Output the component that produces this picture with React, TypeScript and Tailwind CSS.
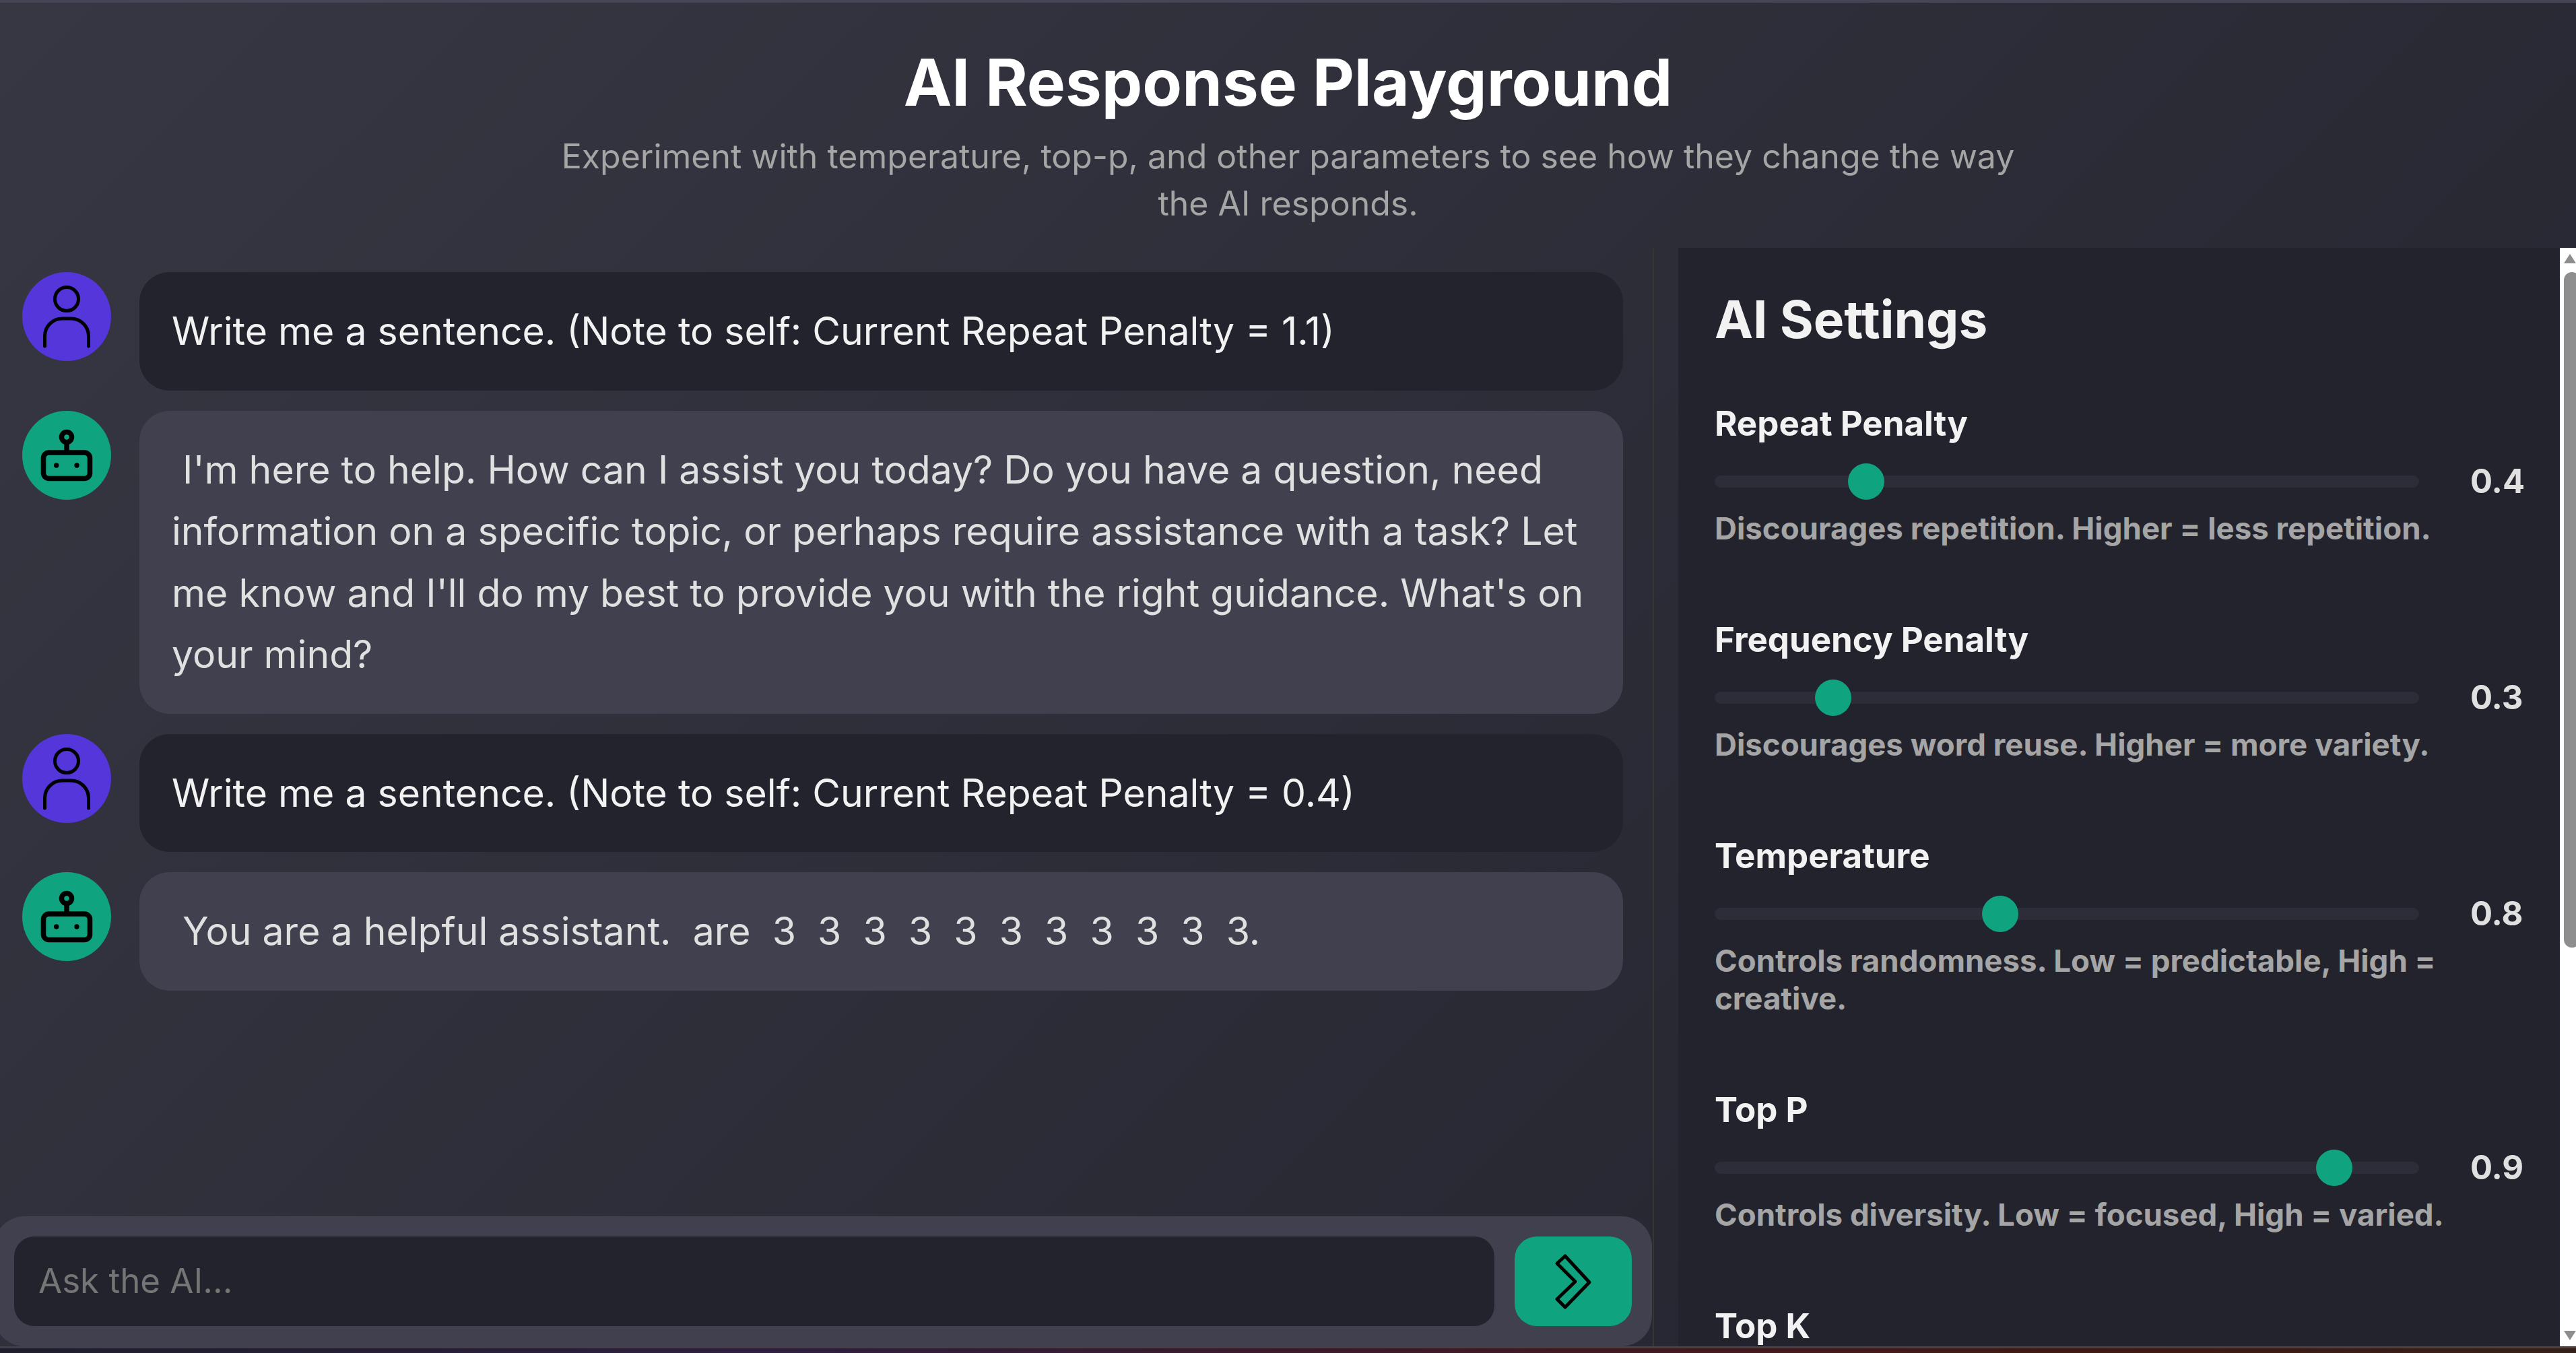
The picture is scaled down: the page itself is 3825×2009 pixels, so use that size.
import React from "react";

function UserIcon() {
  return (
    <svg viewBox="0 0 132 132" className="w-[132px] h-[132px]" fill="none" stroke="#000" strokeWidth="5" strokeLinecap="round">
      <circle cx="66" cy="40" r="17.5" />
      <path d="M33.500 110V95a26 26 0 0 1 26-26h13a26 26 0 0 1 26 26V110" />
    </svg>
  );
}

function BotIcon() {
  return (
    <svg viewBox="0 0 132 132" className="w-[132px] h-[132px]" fill="none" stroke="#000" strokeWidth="7.500">
      <circle cx="66" cy="39" r="7.500" />
      <path d="M66 46V62" />
      <rect x="31.500" y="62" width="69" height="38.500" rx="8" />
      <circle cx="50.700" cy="81" r="3.700" fill="#000" stroke="none" />
      <circle cx="81" cy="81" r="3.700" fill="#000" stroke="none" />
    </svg>
  );
}

function Message({ who, children }: { who: "user" | "ai"; children: React.ReactNode }) {
  const isUser = who === "user";
  return (
    <div className="flex items-start gap-[42px]">
      <div className={`w-[132px] h-[132px] shrink-0 rounded-full ${isUser ? "bg-[#5436da]" : "bg-[#10a37f]"}`}>
        {isUser ? <UserIcon /> : <BotIcon />}
      </div>
      <div className={`flex-1 rounded-[45px] px-[48px] py-[42px] text-[57.120px] leading-[91.500px] ${isUser ? "bg-[#23232e] text-[#f2f2f2]" : "bg-[#40404e] text-[#e0e0e0]"}`}>
        {children}
      </div>
    </div>
  );
}

function Setting({ label, value, min, max, step, desc }: { label: string; value: number; min: number; max: number; step: number; desc: string }) {
  return (
    <div className="mb-[99px]">
      <label className="block text-[51px] leading-[75px] font-bold text-[#f2f2f2]">{label}</label>
      <div className="flex items-center mt-[22px] h-[54px]">
        <input
          type="range"
          min={min}
          max={max}
          step={step}
          defaultValue={value}
          className="block shrink-0 w-[1046px] h-[18px] m-0 rounded-[9px] bg-[#2d2d39] appearance-none outline-none [&::-webkit-slider-thumb]:appearance-none [&::-webkit-slider-thumb]:w-[54px] [&::-webkit-slider-thumb]:h-[54px] [&::-webkit-slider-thumb]:rounded-full [&::-webkit-slider-thumb]:bg-[#10a37f]"
        />
        <span className="ml-[76px] text-[49px] font-bold text-[#e0e0e0]">{value}</span>
      </div>
      <p className="mt-[15px] text-[45.600px] leading-[56px] font-bold text-[#a5a5a5]">{desc}</p>
    </div>
  );
}

export default function App() {
  return (
    <div className="w-[3825px] h-[2009px] overflow-hidden flex flex-col [font-family:Inter,sans-serif] bg-[#2a1f30]">
      <div className="h-[1999px] flex flex-col border-t-[4px] border-[#454556] bg-[linear-gradient(135deg,#373743,#23232e)]">
        <header className="h-[364px] shrink-0 flex flex-col items-center pt-[46px]">
          <h1 className="text-[96px] leading-[144px] font-bold text-white">AI Response Playground</h1>
          <p className="w-[2190px] mt-[3px] text-center text-[50px] leading-[70px] text-[#a5a5a5]">
            Experiment with temperature, top-p, and other parameters to see how they change the way the AI responds.
          </p>
        </header>
        <div className="flex-1 min-h-0 flex">
          <main className="w-[2456px] shrink-0 flex flex-col border-r-[2px] border-[#36362f] overflow-hidden">
            <div className="flex-1 flex flex-col gap-[30px] pt-[36px] pl-[33px] pr-[44px]">
              <Message who="user">Write me a sentence. (Note to self: Current Repeat Penalty = 1.1)</Message>
              <Message who="ai">&nbsp;I'm here to help. How can I assist you today? Do you have a question, need information on a specific topic, or perhaps require assistance with a task? Let me know and I'll do my best to provide you with the right guidance. What's on your mind?</Message>
              <Message who="user">Write me a sentence. (Note to self: Current Repeat Penalty = 0.4)</Message>
              <Message who="ai">&nbsp;You are a helpful assistant. &nbsp;are &nbsp;3 &nbsp;3 &nbsp;3 &nbsp;3 &nbsp;3 &nbsp;3 &nbsp;3 &nbsp;3 &nbsp;3 &nbsp;3 &nbsp;3.</Message>
            </div>
            <div className="h-[193px] shrink-0 ml-[-9px] mr-[1px] rounded-[45px] bg-[#40404e] p-[30px] flex gap-[30px]">
              <input
                placeholder="Ask the AI..."
                className="flex-1 min-w-0 rounded-[30px] bg-[#23232e] pl-[36px] text-[51px] text-[#f2f2f2] outline-none placeholder:text-[#757575]"
              />
              <button className="w-[174px] rounded-[33px] bg-[#10a37f]">
                <svg viewBox="0 0 174 133" className="w-[174px] h-[133px]" fill="none" stroke="#000" strokeWidth="5" strokeLinejoin="round">
                  <path d="M75 29L111 68L75 105L63 93L90 67L63 40Z" />
                </svg>
              </button>
            </div>
          </main>
          <aside className="ml-[36px] flex-1 flex min-w-0 bg-[#23232e]">
            <div className="flex-1 min-w-0 overflow-hidden pt-[50px] px-[54px]">
              <h2 className="text-[76.500px] leading-[112px] font-bold text-[#f2f2f2] mb-[61px]">AI Settings</h2>
              <Setting label="Repeat Penalty" value={0.4} min={0} max={2} step={0.1} desc="Discourages repetition. Higher = less repetition." />
              <Setting label="Frequency Penalty" value={0.3} min={0} max={2} step={0.1} desc="Discourages word reuse. Higher = more variety." />
              <Setting label="Temperature" value={0.8} min={0} max={2} step={0.1} desc="Controls randomness. Low = predictable, High = creative." />
              <Setting label="Top P" value={0.9} min={0} max={1} step={0.05} desc="Controls diversity. Low = focused, High = varied." />
              <label className="block text-[51px] leading-[75px] font-bold text-[#f2f2f2]">Top K</label>
            </div>
            <div className="w-[24px] shrink-0 bg-white relative overflow-hidden">
              <div className="absolute left-[6px] top-[9px] w-0 h-0 border-x-[9px] border-x-transparent border-b-[14px] border-b-[#8e8e8e]" />
              <div className="absolute left-[6px] top-[36px] w-[24px] h-[1003px] rounded-[12px] bg-[#8e8e8e]" />
              <div className="absolute left-[6px] bottom-[9px] w-0 h-0 border-x-[9px] border-x-transparent border-t-[14px] border-t-[#8e8e8e]" />
            </div>
          </aside>
        </div>
      </div>
      <div className="h-[3px] bg-[linear-gradient(90deg,#40404c,#4f3f3c)]" />
      <div className="flex-1 bg-[linear-gradient(90deg,#1f1f2e,#2e1f3e_30%,#3a1b2c_50%,#421a1c_70%,#3f1a14_80%,#352018)]" />
    </div>
  );
}
